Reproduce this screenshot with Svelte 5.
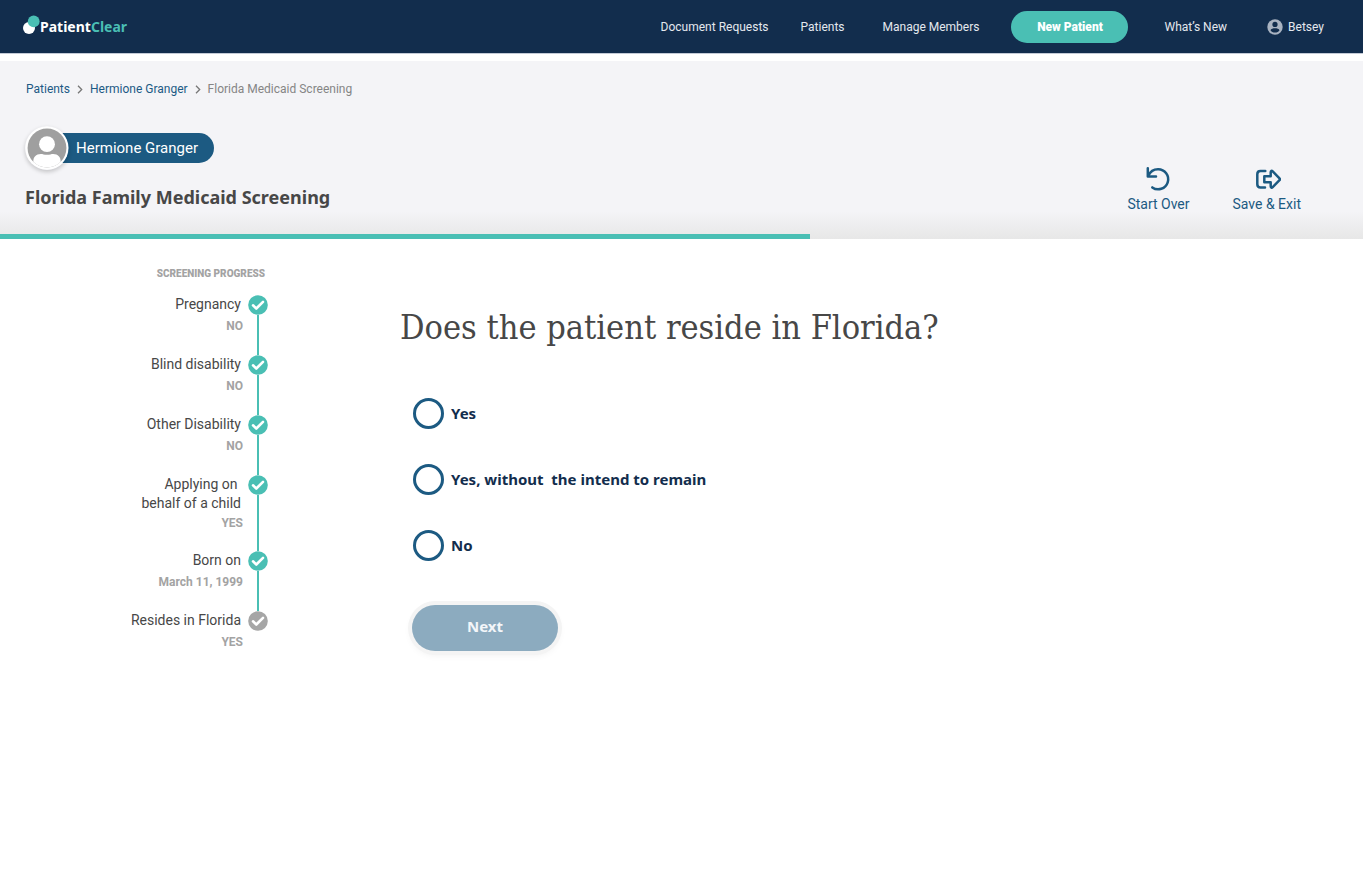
<script>
  let choice = $state('');

  const steps = [
    { title: ['Pregnancy'], answer: 'NO', done: true },
    { title: ['Blind disability'], answer: 'NO', done: true },
    { title: ['Other Disability'], answer: 'NO', done: true },
    { title: ['Applying on\u00a0', 'behalf of a child'], answer: 'YES', done: true },
    { title: ['Born on'], answer: 'March 11, 1999', done: true },
    { title: ['Resides in Florida'], answer: 'YES', done: false }
  ];

  const options = ['Yes', 'Yes, without \u00a0the intend to remain', 'No'];
  const progress = 59.4;
</script>

<header class="topbar">
  <a class="brand" href="#home">
    <svg width="17" height="20" viewBox="0 0 17 20" aria-hidden="true">
      <circle cx="6" cy="13" r="6" fill="#fff" />
      <circle cx="10.700" cy="6.4" r="5.9" fill="#4abfb4" />
    </svg>
    <span>Patient<b>Clear</b></span>
  </a>
  <nav class="menu">
    <a href="#requests">Document Requests</a>
    <a href="#patients">Patients</a>
    <a class="members" href="#members">Manage Members</a>
    <button class="new" type="button">New Patient</button>
    <a class="news" href="#news">What’s New</a>
    <a class="user" href="#account">
      <svg width="16" height="16" viewBox="0 0 16 16" aria-hidden="true">
        <circle cx="8" cy="8" r="7.7" fill="#a9b3c1" />
        <circle cx="8" cy="5.4" r="2.6" fill="#122d4d" />
        <path d="M3.5 11.2C4 9.9 6 9.3 8 9.3s4 .6 4.500 1.900C11.700 12.600 10 13.500 8 13.500s-3.700-.9-4.500-2.300z" fill="#122d4d" />
      </svg>
      Betsey
    </a>
  </nav>
</header>

<section class="hero">
  <nav class="crumbs" aria-label="Breadcrumb">
    <a href="#patients">Patients</a>
    <svg width="6" height="9" viewBox="0 0 6 9" aria-hidden="true"><path d="M1 .8 4.700 4.500 1 8.200" /></svg>
    <a href="#hermione">Hermione Granger</a>
    <svg width="6" height="9" viewBox="0 0 6 9" aria-hidden="true"><path d="M1 .8 4.700 4.500 1 8.200" /></svg>
    <span>Florida Medicaid Screening</span>
  </nav>

  <div class="head">
    <div class="subject">
      <div class="person">
        <svg class="avatar" width="44" height="44" viewBox="0 0 46 46" aria-hidden="true">
          <circle cx="23" cy="23" r="22.500" fill="#fff" />
          <circle cx="23" cy="23" r="20.300" fill="#9f9f9f" />
          <circle cx="23" cy="19" r="8.300" fill="#fff" />
          <path d="M8.700 37.500C8.500 32.500 11.500 29.300 16.500 29.300c2.200 0 3.300.8 6.500.8s4.300-.8 6.500-.8c5 0 8 3.200 7.800 8.200C33.500 41.300 28.500 43.500 23 43.500S12.500 41.300 8.700 37.500z" fill="#fff" />
        </svg>
        <span class="pill">Hermione Granger</span>
      </div>
      <h1>Florida Family Medicaid Screening</h1>
    </div>
    <div class="actions">
      <button type="button">
        <svg width="26" height="26" viewBox="0 0 26 26" aria-hidden="true">
          <path d="M2.800 2.300V10.400H11" />
          <path d="M3.400 9.800C5.200 5.600 9 3.300 13 3.300A10 10 0 1 1 7.300 21.400" />
        </svg>
        Start Over
      </button>
      <button type="button">
        <svg width="28" height="26" viewBox="0 0 28 26" aria-hidden="true">
          <path d="M12.300 5H7.500C5.500 5 4.300 6.200 4.300 8.200V18.300C4.300 20.300 5.500 21.500 7.500 21.500H12" />
          <path d="M11.300 10.200H17.700V6.200C17.700 4.700 18.700 4.300 19.700 5.300L26.500 12.300C27.100 12.900 27.100 13.600 26.500 14.200L19.700 21.200C18.700 22.200 17.700 21.800 17.700 20.300V16.300H11.300z" />
        </svg>
        Save &amp; Exit
      </button>
    </div>
  </div>
  <div class="track"><div class="bar" style="width: {progress}%"></div></div>
</section>

<main>
  <aside>
    <h3>SCREENING PROGRESS</h3>
    <ol>
      {#each steps as step}
        <li>
          <div class="text">
            {#each step.title as line}
              <span class="name">{line}</span>
            {/each}
            <span class="answer" class:tight={step.title.length > 1}>{step.answer}</span>
          </div>
          <div class="marker">
            <svg width="20" height="20" viewBox="0 0 20 20" aria-hidden="true">
              <circle cx="10" cy="10" r="9.800" fill={step.done ? '#4abfb4' : '#a6a6a6'} />
              <path d="M5 10.300 8.300 13.500 15 6.800" fill="none" stroke="#fff" stroke-width="2.600" stroke-linecap="round" stroke-linejoin="round" />
            </svg>
            {#if step.done}<i></i>{/if}
          </div>
        </li>
      {/each}
    </ol>
  </aside>

  <form>
    <h2 id="question">Does the patient reside in Florida?</h2>
    <div class="options" role="radiogroup" aria-labelledby="question">
      {#each options as option}
        <label>
          <input type="radio" name="reside" value={option} bind:group={choice} />
          <span>{option}</span>
        </label>
      {/each}
    </div>
    <button class="next" type="button">Next</button>
  </form>
</main>

<style>
  :global(body) {
    margin: 0;
    background: #fff;
    font-family: Roboto, 'Liberation Sans', sans-serif;
    color: #474747;
  }
  a {
    color: inherit;
    text-decoration: none;
  }
  button {
    font-family: inherit;
    border: 0;
    cursor: pointer;
  }
  h1, h2, h3, ol {
    margin: 0;
    padding: 0;
  }

  .topbar {
    display: flex;
    align-items: center;
    justify-content: space-between;
    height: 53px;
    padding: 0 39px 0 23px;
    background: #122d4d;
    border-bottom: 1px solid #c3cad6;
    margin-bottom: 7px;
  }
  .brand {
    display: flex;
    align-items: center;
    color: #fff;
    font: 700 14px/20px 'Noto Sans', sans-serif;
  }
  .brand svg {
    margin-bottom: 4px;
  }
  .brand b {
    color: #4abfb4;
    font-weight: inherit;
  }
  .menu {
    display: flex;
    align-items: center;
    gap: 32px;
    font-size: 12px;
    line-height: 20px;
    color: #e4e8ee;
  }
  .members {
    margin-left: 6px;
  }
  .new {
    width: 117px;
    height: 32px;
    border-radius: 16px;
    background: #4abfb4;
    color: #fff;
    font-size: 12px;
    font-weight: 900;
  }
  .news {
    margin-left: 4px;
  }
  .user {
    display: flex;
    align-items: center;
    gap: 5px;
    margin-left: 8px;
  }

  .hero {
    background: linear-gradient(to top, #e7e7e7, #f4f4f7 28px);
    padding-top: 18px;
  }
  .crumbs {
    display: flex;
    align-items: center;
    gap: 7px;
    padding: 0 26px;
    font-size: 12px;
    line-height: 20px;
    color: #858585;
  }
  .crumbs a {
    color: #1c5a85;
  }
  .crumbs path {
    fill: none;
    stroke: #777;
    stroke-width: 1.300;
  }
  .head {
    display: flex;
    justify-content: space-between;
    align-items: flex-end;
    padding: 27px 62px 20px 25px;
  }
  .person {
    display: flex;
    align-items: center;
  }
  .avatar {
    position: relative;
    border-radius: 50%;
    box-shadow: 0 2px 4px rgba(0, 0, 0, 0.2);
  }
  .pill {
    margin-left: -16px;
    padding: 0 16px 0 23px;
    border-radius: 0 15px 15px 0;
    background: #1c5a82;
    color: #fff;
    font-size: 15px;
    line-height: 30px;
  }
  h1 {
    margin-top: 14px;
    padding-bottom: 4px;
    font: 700 18px/26px 'Noto Sans', sans-serif;
  }
  .actions {
    display: flex;
    gap: 43px;
  }
  .actions button {
    display: flex;
    flex-direction: column;
    align-items: center;
    gap: 2px;
    padding: 0;
    background: none;
    color: #1c5a82;
    font-size: 14px;
    line-height: 20px;
  }
  .actions path {
    fill: none;
    stroke: #1c5a82;
    stroke-width: 2.500;
    stroke-linecap: round;
    stroke-linejoin: round;
  }
  .track {
    height: 5px;
  }
  .bar {
    height: 100%;
    background: #4abfb4;
  }

  main {
    display: flex;
    align-items: flex-start;
    gap: 132px;
  }
  aside {
    width: 268px;
    padding-top: 25px;
  }
  h3 {
    padding-right: 3px;
    text-align: right;
    font-size: 10px;
    line-height: 20px;
    font-weight: 900;
    color: #a3a3a3;
    margin-bottom: 11px;
  }
  ol {
    list-style: none;
  }
  li {
    display: flex;
    justify-content: flex-end;
    gap: 5px;
  }
  .text {
    display: flex;
    flex-direction: column;
    align-items: flex-end;
    padding-bottom: 17px;
  }
  .name {
    padding-right: 2px;
    font-size: 14px;
    line-height: 19px;
  }
  .answer {
    font-size: 12px;
    line-height: 24px;
    font-weight: 700;
    color: #a3a3a3;
  }
  .tight {
    line-height: 21px;
  }
  .marker {
    display: flex;
    flex-direction: column;
    align-items: center;
  }
  .marker i {
    flex: 1;
    width: 2px;
    background: #4abfb4;
  }

  form {
    display: flex;
    flex-direction: column;
    align-items: flex-start;
    padding-top: 64px;
  }
  h2 {
    font: 400 34px/48px 'DejaVu Serif Condensed', 'DejaVu Serif', serif;
  }
  .options {
    display: flex;
    flex-direction: column;
    align-items: flex-start;
    gap: 34px;
    padding: 46px 0 44px 13px;
  }
  label {
    display: flex;
    align-items: center;
    gap: 7px;
    color: #122d4d;
    font: 700 15px/32px 'Noto Sans', sans-serif;
  }
  input {
    appearance: none;
    box-sizing: border-box;
    width: 31px;
    height: 31px;
    margin: 0;
    border: 3px solid #1c5a82;
    border-radius: 50%;
  }
  input:checked {
    box-shadow: inset 0 0 0 5px #fff;
    background: #1c5a82;
  }
  .next {
    width: 146px;
    height: 46px;
    margin-left: 12px;
    padding: 0 0 4px;
    border-radius: 23px;
    background: #8cabbf;
    color: #f3f6f9;
    font: 700 15px/20px 'Noto Sans', sans-serif;
    box-shadow: 0 0 0 4px #f4f4f4, 0 3px 8px rgba(0, 0, 0, 0.08);
  }
</style>
